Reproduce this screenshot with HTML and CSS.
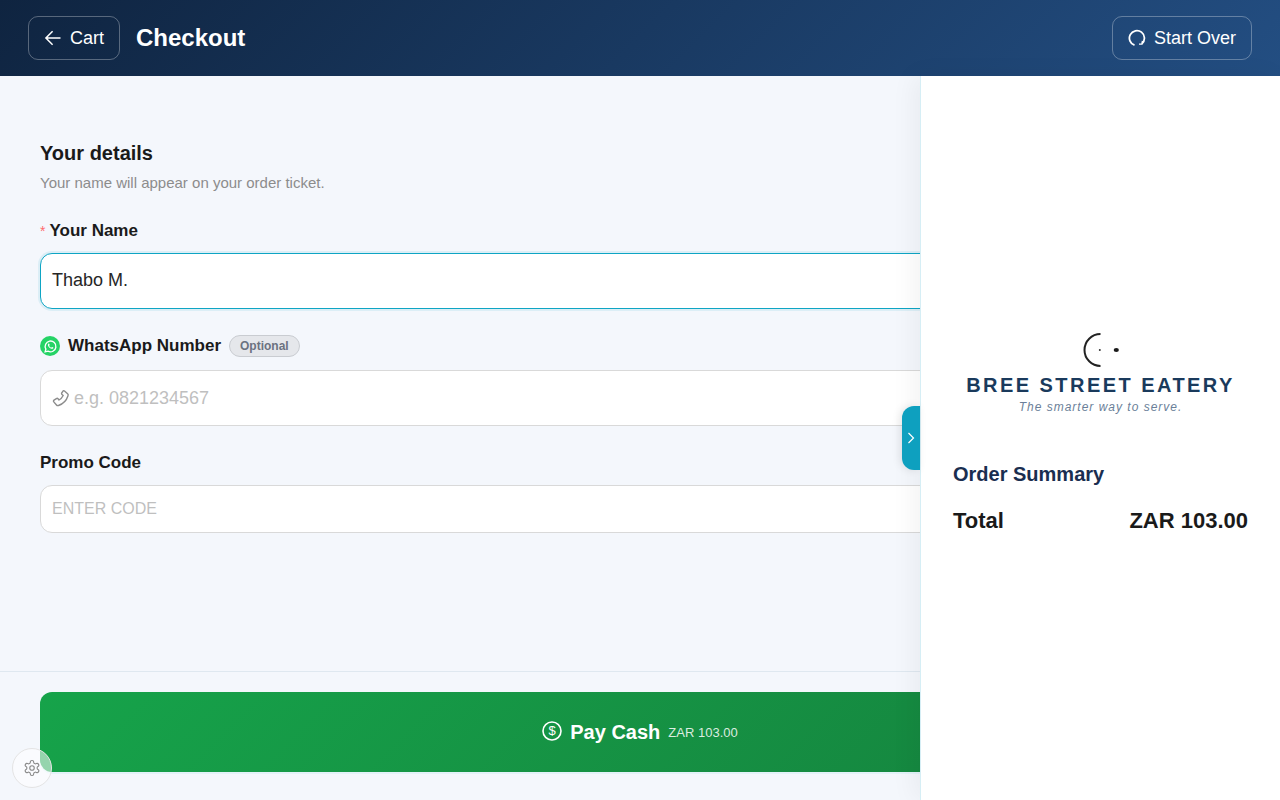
FILE: index.html
```html
<!DOCTYPE html>
<html lang="en">
<head>
<meta charset="utf-8">
<title>Checkout</title>
<link rel="stylesheet" href="styles.css">
</head>
<body>
<div class="app">
  <header class="topbar">
    <div class="topbar-left">
      <button class="ghost-btn cart-btn">
        <svg class="ghost-icon" viewBox="0 0 18 18" fill="none" stroke="currentColor" stroke-width="1.5"><path d="M16.5 9H2.2M8.6 2.2 1.900 9l6.700 6.800"/></svg>
        <span>Cart</span>
      </button>
      <h1 class="page-title">Checkout</h1>
    </div>
    <button class="ghost-btn over-btn">
      <svg class="ghost-icon" viewBox="0 0 18 18" fill="none" stroke="currentColor" stroke-width="1.800"><path d="M6.500 16.200A7.500 7.500 0 1 1 14 14.600"/><path d="M14.400 11.800 14 15.200 11 15.200" stroke-width="1.300"/></svg>
      <span>Start Over</span>
    </button>
  </header>
  <main class="stage">
    <div class="form-scroll">
      <h2 class="section-title">Your details</h2>
      <p class="section-sub">Your name will appear on your order ticket.</p>
      <div class="field name-field">
        <div class="label label-snug"><span class="req">*</span><span>Your Name</span></div>
        <div class="input focus">Thabo M.</div>
      </div>
      <div class="field wa-field">
        <div class="label label-tall">
          <span class="wa-dot">
            <svg viewBox="0 0 24 24" width="15" height="15" fill="none"><path d="M3.400 20.600l1.200-4.400A8.600 8.600 0 1 1 8 19.500z" stroke="#fff" stroke-width="2.200"/><path d="M8.600 7.400c.5-.5 1.100-.4 1.300.1l.7 1.600c.1.3 0 .6-.2.8l-.6.7c.7 1.400 1.800 2.500 3.300 3.200l.8-.8c.2-.2.5-.3.8-.2l1.600.8c.4.2.5.8.1 1.300-.7.9-1.800 1.100-3 .7-2.600-.8-4.700-2.900-5.500-5.200-.3-1.100 0-2.200.7-3z" fill="#fff"/></svg>
          </span>
          <span>WhatsApp Number</span>
          <span class="badge">Optional</span>
        </div>
        <div class="input placeholder">
          <svg class="phone" viewBox="0 0 18 18" fill="none" stroke="#8c8c8c" stroke-width="1.400" stroke-linejoin="round"><path d="M12.200 1.800 15.600 4.800C16.300 5.400 16.400 6 16 6.800 14.500 11.500 11.200 15 6.500 16.500 5.700 16.800 5 16.600 4.500 16L1.800 12.900C1.300 12.300 1.400 11.600 2 11.200L4.400 9.600C5 9.200 5.600 9.300 6 9.800L7 11C8.800 10 10.200 8.500 11.200 6.500L10 5.400C9.500 5 9.400 4.300 9.800 3.800L11.100 2C11.400 1.600 11.900 1.500 12.200 1.800Z"/></svg>
          <span>e.g. 0821234567</span>
        </div>
      </div>
      <div class="field promo-field">
        <div class="label label-snug"><span>Promo Code</span></div>
        <div class="input promo placeholder"><span>ENTER CODE</span></div>
      </div>
    </div>
    <footer class="pay-bar">
      <button class="pay-btn">
        <svg class="pay-icon" viewBox="0 0 20 20" fill="none" stroke="#fff"><circle cx="10" cy="10" r="9" stroke-width="1.600"/><text x="10" y="14.400" class="dollar">$</text></svg>
        <span class="pay-label">Pay Cash</span>
        <span class="pay-amount">ZAR 103.00</span>
      </button>
    </footer>
    <aside class="summary">
      <button class="handle" aria-label="Collapse">
        <svg viewBox="0 0 10 14" width="10" height="14" fill="none" stroke="#fff" stroke-width="1.200"><path d="M2.500 2 7.500 7l-5 5"/></svg>
      </button>
      <div class="brand">
        <svg class="brand-mark" viewBox="0 0 64 36" width="64" height="36" fill="none">
          <path d="M31.500 2A16 16 0 0 0 31.500 34" stroke="#222" stroke-width="2"/>
          <circle cx="30.800" cy="18" r="1" fill="#333"/>
          <ellipse cx="47.300" cy="18" rx="2.600" ry="1.900" fill="#1a1a1a"/>
        </svg>
        <div class="brand-name">BREE STREET EATERY</div>
        <div class="brand-tag">The smarter way to serve.</div>
      </div>
      <h3 class="summary-title">Order Summary</h3>
      <div class="total-row"><span>Total</span><span>ZAR 103.00</span></div>
    </aside>
    <button class="gear" aria-label="Settings">
      <svg viewBox="0 0 24 24" width="18" height="18" fill="none" stroke="#8a8a8a" stroke-width="1.500" stroke-linecap="round" stroke-linejoin="round"><path d="M12.220 2h-.440a2 2 0 0 0-2 2v.180a2 2 0 0 1-1 1.730l-.430.250a2 2 0 0 1-2 0l-.150-.080a2 2 0 0 0-2.730.730l-.220.380a2 2 0 0 0 .730 2.730l.150.100a2 2 0 0 1 1 1.720v.510a2 2 0 0 1-1 1.740l-.150.090a2 2 0 0 0-.730 2.730l.220.380a2 2 0 0 0 2.730.730l.150-.080a2 2 0 0 1 2 0l.430.250a2 2 0 0 1 1 1.730V20a2 2 0 0 0 2 2h.440a2 2 0 0 0 2-2v-.180a2 2 0 0 1 1-1.730l.430-.250a2 2 0 0 1 2 0l.150.080a2 2 0 0 0 2.730-.730l.220-.390a2 2 0 0 0-.730-2.730l-.150-.080a2 2 0 0 1-1-1.740v-.500a2 2 0 0 1 1-1.740l.150-.090a2 2 0 0 0 .730-2.730l-.220-.380a2 2 0 0 0-2.730-.730l-.150.080a2 2 0 0 1-2 0l-.430-.250a2 2 0 0 1-1-1.730V4a2 2 0 0 0-2-2z"/><circle cx="12" cy="12" r="3"/></svg>
    </button>
  </main>
</div>
</body>
</html>
```
FILE: styles.css
```css
* { box-sizing: border-box; }
html, body { margin: 0; height: 100%; }
body { font-family: "Liberation Sans", Arial, sans-serif; color: #1a1a1a; background: #f4f7fc; overflow: hidden; }
button { font-family: inherit; cursor: pointer; }
.app { height: 800px; display: flex; flex-direction: column; }

.topbar { height: 76px; flex: none; display: flex; align-items: center; justify-content: space-between; padding: 0 28px; background: linear-gradient(135deg, #0f2440 0%, #234e82 100%); color: #fff; }
.topbar-left { display: flex; align-items: center; gap: 16px; }
.ghost-btn { height: 44px; display: flex; align-items: center; gap: 8px; background: transparent; color: #fff; border: 1px solid rgba(255,255,255,.3); border-radius: 10px; font-size: 18px; padding: 0 15px; }
.ghost-icon { width: 18px; height: 18px; flex: none; }
.page-title { margin: 0; font-size: 24px; font-weight: 700; line-height: 1; }

.stage { position: relative; flex: 1; min-height: 0; display: flex; flex-direction: column; }
.form-scroll { flex: 1; padding: 66px 40px 0; }
.section-title { margin: 0; font-size: 20px; line-height: 23px; font-weight: 700; color: #1a1a1a; }
.section-sub { margin: 9px 0 0; font-size: 15px; line-height: 17px; color: #8c8c8c; }
.field { display: flex; flex-direction: column; }
.name-field { margin-top: 29px; }
.wa-field { margin-top: 25px; }
.promo-field { margin-top: 26px; }
.label { display: flex; align-items: center; gap: 8px; font-size: 17px; font-weight: 700; line-height: 22px; color: #1a1a1a; margin-bottom: 12px; }
.label-snug { margin-bottom: 11px; }
.label-tall { min-height: 24px; }
.req { color: #ff6b6d; font-size: 14px; font-weight: 400; margin-right: -4px; }
.wa-dot { width: 20px; height: 20px; border-radius: 50%; background: #25d366; display: flex; align-items: center; justify-content: center; }
.badge { height: 22px; display: flex; align-items: center; padding: 0 10px; border-radius: 11px; background: #e5e7eb; border: 1px solid #c9ccd1; color: #6b7280; font-size: 12px; font-weight: 700; }
.input { height: 56px; display: flex; align-items: center; gap: 4px; background: #fff; border: 1px solid #d9d9d9; border-radius: 12px; padding: 0 11px; font-size: 18px; color: #262626; }
.input.focus { border-color: #0ea5c4; box-shadow: 0 0 0 2px rgba(14,165,196,.1); padding-bottom: 2px; }
.input.placeholder { color: #bfbfbf; }
.input.promo { height: 48px; font-size: 16px; }
.phone { width: 18px; height: 18px; flex: none; }

.pay-bar { flex: none; height: 129px; border-top: 1px solid #dfe8f0; padding: 20px 40px 0; }
.pay-btn { width: 100%; height: 80px; display: flex; align-items: center; justify-content: center; gap: 8px; border: 0; border-radius: 12px; color: #fff; background: linear-gradient(135deg, #16a34a 0%, #15803d 100%); box-shadow: 0 2px 0 #e3f2f8; }
.pay-icon { width: 20px; height: 20px; flex: none; margin-bottom: 2px; }
.dollar { font-family: "Liberation Sans", sans-serif; font-size: 13px; text-anchor: middle; fill: #fff; stroke: none; }
.pay-label { font-size: 20px; font-weight: 700; }
.pay-amount { font-size: 13px; color: rgba(255,255,255,.85); }

.summary { position: absolute; top: 0; right: 0; bottom: 0; width: 360px; background: #fff; border-left: 1px solid #d6eef5; box-shadow: -6px 0 24px rgba(0,0,0,.05); padding: 0 32px 12px; display: flex; flex-direction: column; justify-content: center; }
.handle { position: absolute; left: -19px; top: 330px; width: 18px; height: 64px; padding: 0; border: 0; border-radius: 12px 0 0 12px; background: #0ea0bf; box-shadow: -2px 0 8px rgba(0,0,0,.1); display: flex; align-items: center; justify-content: center; }
.brand { display: flex; flex-direction: column; align-items: center; }
.brand-mark { display: block; margin-bottom: 6px; }
.brand-name { font-size: 20px; font-weight: 700; letter-spacing: 2.450px; line-height: 23px; color: #1a3a5c; white-space: nowrap; }
.brand-tag { font-size: 12px; font-style: italic; letter-spacing: 1px; line-height: 14px; color: #6b7f99; margin-top: 3px; }
.summary-title { margin: 49px 0 0; font-size: 20px; line-height: 23px; font-weight: 700; color: #1a2e50; }
.total-row { display: flex; justify-content: space-between; margin-top: 22px; font-size: 22px; line-height: 25px; font-weight: 700; color: #1a1a1a; }

.gear { position: absolute; left: 12px; bottom: 12px; width: 40px; height: 40px; padding: 0; border-radius: 50%; background: rgba(255,255,255,.55); border: 1px solid #e4e4e4; display: flex; align-items: center; justify-content: center; }
```
